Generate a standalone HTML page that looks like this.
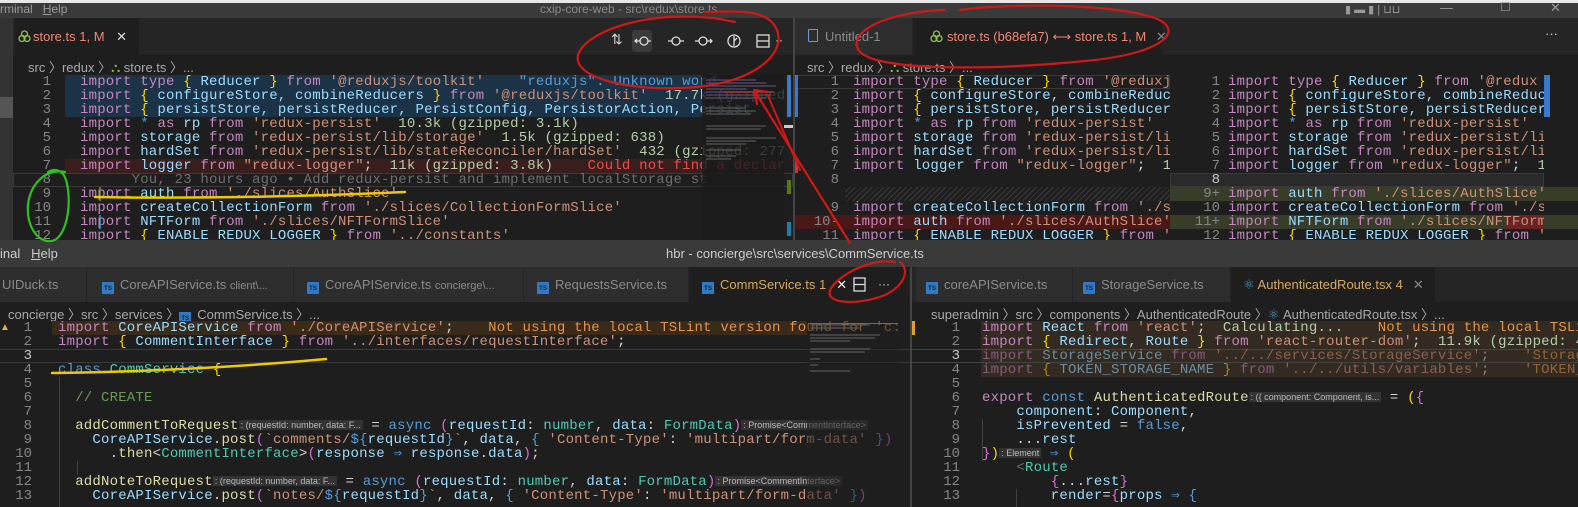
<!DOCTYPE html>
<html><head><meta charset="utf-8"><style>
*{margin:0;padding:0;box-sizing:border-box}
body{width:1578px;height:507px;background:#1e1e1e;position:relative;overflow:hidden;font-family:"Liberation Sans",sans-serif}
.a{position:absolute}
.pane{position:absolute;overflow:hidden}
.ln{position:absolute;height:14px;line-height:14px;white-space:pre;font-family:"Liberation Mono",monospace;font-size:14px;letter-spacing:0.2px;color:#9cdcfe}
.num{position:absolute;height:14px;line-height:14px;font-family:"Liberation Mono",monospace;font-size:14px;color:#858585;text-align:right;white-space:pre}
.k{color:#c586c0}.b{color:#ffd700}.s{color:#ce9178}.c{color:#6a9955}.n{color:#b5cea8}.g{color:#6e6e6e}.w{color:#d4d4d4}.e{color:#e2944a}.t{color:#4ec9b0}.bl{color:#569cd6}.y{color:#dcdcaa}.p{color:#da70d6}
.hint{font-family:"Liberation Sans",sans-serif;font-size:9px;background:#333;color:#bbb;padding:0 2px;letter-spacing:0;position:relative;top:-1px}
.tab{position:absolute;height:35px;line-height:35px;font-size:13px;color:#8b8b8b;white-space:nowrap;background:#2d2d2d;border-right:1px solid #252526}
.crumb{position:absolute;font-size:13px;color:#a9a9a9;white-space:nowrap}
.ts{display:inline-block;width:12px;height:12px;background:#3178c6;color:#1e1e1e;font-size:6px;line-height:14px;text-align:center;font-weight:bold;vertical-align:-1px;margin-right:6px}
</style></head><body>

<!-- ===== TOP HALF ===== -->
<div class="a" style="left:0;top:0;width:1578px;height:3px;background:#e8e8e8"></div>
<div class="a" style="left:0;top:3px;width:1578px;height:15px;background:#3a3a3a"></div>
<div class="a" style="left:0;top:2px;font-size:12px;color:#9a9a9a;white-space:pre">rminal   <u>H</u>elp</div>
<div class="a" style="left:540px;top:2px;font-size:12px;color:#8a8a8a">cxip-core-web - src\redux\store.ts</div>
<div class="a" style="left:1345px;top:3px;width:90px;height:12px;color:#999;font-size:11px">▮ ▬ ▮ | ⊔⊔</div>
<div class="a" style="left:1440px;top:0;font-size:13px;color:#999">—</div>
<div class="a" style="left:1500px;top:0;font-size:12px;color:#999">☐</div>
<div class="a" style="left:1550px;top:0;font-size:13px;color:#999">✕</div>

<!-- top-left pane -->
<div class="a" style="left:0;top:18px;width:13px;height:222px;background:#333"></div>
<div class="a" style="left:0;top:97px;width:13px;height:21px;background:#555"></div>
<div class="pane" style="left:13px;top:18px;width:780px;height:222px;background:#1e1e1e">
  <div class="a" style="left:0;top:0;width:780px;height:37px;background:#252526"></div>
  <div class="tab" style="left:2px;top:0;width:125px;height:37px;line-height:37px;background:#1e1e1e;color:#f48771;padding-left:18px">store.ts 1, M <span style="color:#ddd;margin-left:8px">✕</span></div>
  <svg class="a" style="left:5px;top:12px" width="13" height="13" viewBox="0 0 13 13"><g fill="none" stroke="#8dc149" stroke-width="1.3"><circle cx="6.5" cy="4" r="3"/><circle cx="4" cy="8.5" r="3"/><circle cx="9" cy="8.5" r="3"/></g></svg>
  <div class="a" style="left:619px;top:12px;width:20px;height:22px;background:#3a3a3a;border-radius:3px"></div>
  <div class="a" style="left:598px;top:13px;color:#ccc;font-size:14px">⇅</div>
  <svg class="a" style="left:620px;top:15px" width="150" height="16" viewBox="0 0 150 16"><g fill="none" stroke="#ddd" stroke-width="1.3"><circle cx="11" cy="8" r="4"/><path d="M2 8h5M15 8h3M4 6l-2 2 2 2"/><circle cx="43" cy="8" r="4"/><path d="M35 8h4M47 8h4"/><circle cx="70" cy="8" r="4"/><path d="M62 8h4M74 8h5M77 6l2 2-2 2"/><circle cx="101" cy="8" r="6"/><path d="M101 3v10M101 8l3-3"/><rect x="124" y="2" width="12" height="12"/><path d="M124 8h12"/></g><text x="142" y="11" fill="#ddd" font-size="12">···</text></svg>
  <div class="crumb" style="left:15px;top:39px">src 〉redux 〉<span style="color:#8dc149">⛬</span> store.ts 〉...</div>
</div>
<div class="pane" style="left:13px;top:75px;width:780px;height:165px">
  <div class="a" style="left:52px;top:0;width:640px;height:42px;background:#1c3347"></div>
  <div class="a" style="left:52px;top:84px;width:640px;height:14px;background:#3a1d1d"></div>
  <div class="a" style="left:0;top:98px;width:780px;height:14px;border:1px solid #3a3a3a"></div>
  <div class="a" style="left:86px;top:112px;width:2px;height:14px;background:#587c0c"></div>
  <div class="a" style="left:86px;top:140px;width:2px;height:14px;background:#1b81a8"></div>
  <div class="num" style="left:0;top:0;width:38px">1
2
3
4
5
6
7
8
9
10
11
12</div>
</div>
<div class="pane" style="left:80px;top:75px;width:705px;height:165px">
<div class="ln" style="top:0"><span class="k">import</span> <span class="k">type</span> <span class="b">{</span> Reducer <span class="b">}</span> <span class="k">from</span> <span class="s">'@reduxjs/toolkit'</span>    <span class="bl">"reduxjs": Unknown word</span></div>
<div class="ln" style="top:14px"><span class="k">import</span> <span class="b">{</span> configureStore, combineReducers <span class="b">}</span> <span class="k">from</span> <span class="s">'@reduxjs/toolkit'</span>  <span class="n">17.7k (gzipped</span></div>
<div class="ln" style="top:28px"><span class="k">import</span> <span class="b">{</span> persistStore, persistReducer, PersistConfig, PersistorAction, Persist</div>
<div class="ln" style="top:42px"><span class="k">import</span> <span class="bl">*</span> <span class="k">as</span> rp <span class="k">from</span> <span class="s">'redux-persist'</span>  <span class="n">10.3k (gzipped: 3.1k)</span></div>
<div class="ln" style="top:56px"><span class="k">import</span> storage <span class="k">from</span> <span class="s">'redux-persist/lib/storage'</span>  <span class="n">1.5k (gzipped: 638)</span></div>
<div class="ln" style="top:70px"><span class="k">import</span> hardSet <span class="k">from</span> <span class="s">'redux-persist/lib/stateReconciler/hardSet'</span>  <span class="n">432 (gzipped: 277)</span></div>
<div class="ln" style="top:84px"><span class="k">import</span> logger <span class="k">from</span> <span class="s">"redux-logger"</span><span class="w">;</span>  <span class="n">11k (gzipped: 3.8k)</span>    <span style="color:#f14c4c">Could not find a declar</span></div>
<div class="ln g" style="top:98px">      You, 23 hours ago • Add redux-persist and implement localStorage st</div>
<div class="ln" style="top:112px"><span class="k">import</span> auth <span class="k">from</span> <span class="s">'./slices/AuthSlice'</span></div>
<div class="ln" style="top:126px"><span class="k">import</span> createCollectionForm <span class="k">from</span> <span class="s">'./slices/CollectionFormSlice'</span></div>
<div class="ln" style="top:140px"><span class="k">import</span> NFTForm <span class="k">from</span> <span class="s">'./slices/NFTFormSlice'</span></div>
<div class="ln" style="top:154px"><span class="k">import</span> <span class="b">{</span> ENABLE_REDUX_LOGGER <span class="b">}</span> <span class="k">from</span> <span class="s">'../constants'</span></div>
</div>
<!-- minimap -->
<div class="a" style="left:702px;top:75px;width:82px;height:165px;background:rgba(26,26,26,0.8)"></div>
<svg class="a" style="left:704px;top:78px" width="78" height="150"><g stroke-width="1.2">
<path d="M2 2h50M2 5h60M2 8h70M2 11h40M2 14h45M2 17h65M2 20h60" stroke="#5a4a70"/><path d="M20 14h50" stroke="#b04040"/>
<path d="M2 30h40M2 33h50M2 36h45M2 48h60M2 51h55M2 60h70M2 63h50M2 66h40M2 72h35M2 78h30M2 81h25" stroke="#555"/>
</g></svg>
<div class="a" style="left:787px;top:75px;width:4px;height:42px;background:#3a78c8"></div>
<div class="a" style="left:787px;top:180px;width:4px;height:14px;background:#587c0c"></div>
<div class="a" style="left:787px;top:222px;width:4px;height:14px;background:#1b81a8"></div>
<div class="a" style="left:784px;top:125px;width:10px;height:3px;background:#ccc"></div>

<!-- top-right pane -->
<div class="a" style="left:793px;top:18px;width:2px;height:222px;background:#444"></div>
<div class="pane" style="left:795px;top:18px;width:783px;height:222px;background:#1e1e1e">
  <div class="a" style="left:0;top:0;width:783px;height:37px;background:#252526"></div>
  <div class="tab" style="left:0;top:0;width:118px;height:37px;line-height:37px;padding-left:30px">Untitled-1</div>
  <div class="a" style="left:13px;top:11px;width:10px;height:13px;border:1.5px solid #6b9bd1;border-radius:1px"></div>
  <div class="tab" style="left:118px;top:0;width:250px;height:37px;line-height:37px;background:#1e1e1e;color:#f48771;padding-left:34px">store.ts (b68efa7) ⟷ store.ts 1, M <span style="color:#888;margin-left:6px">✕</span></div>
  <svg class="a" style="left:135px;top:12px" width="13" height="13" viewBox="0 0 13 13"><g fill="none" stroke="#8dc149" stroke-width="1.3"><circle cx="6.5" cy="4" r="3"/><circle cx="4" cy="8.5" r="3"/><circle cx="9" cy="8.5" r="3"/></g></svg>
  <div class="a" style="left:750px;top:8px;color:#ccc;font-size:13px">···</div>
  <div class="crumb" style="left:12px;top:39px">src 〉redux 〉<span style="color:#8dc149">⛬</span> store.ts 〉...</div>
</div>
<div class="pane" style="left:795px;top:75px;width:375px;height:165px">
  <div class="a" style="left:0;top:0;width:375px;height:14px;border:1px solid #3a3a3a"></div>
  <div class="a" style="left:0;top:140px;width:375px;height:14px;background:#4b1818"></div>
  <div class="a" style="left:50px;top:112px;width:325px;height:14px;background:repeating-linear-gradient(135deg,#1e1e1e 0 3px,#3a3a3a 3px 4px)"></div>
  <div class="a" style="left:0;top:0;width:3px;height:42px;background:#3a78c8"></div>
  <div class="a" style="left:0;top:84px;width:3px;height:14px;background:#c33"></div>
  <div class="num" style="left:0;top:0;width:44px">1
2
3
4
5
6
7
8

9
10-
11</div>
<div style="position:absolute;left:58px;top:0">
<div class="ln" style="top:0"><span class="k">import</span> <span class="k">type</span> <span class="b">{</span> Reducer <span class="b">}</span> <span class="k">from</span> <span class="s">'@reduxjs</span></div>
<div class="ln" style="top:14px"><span class="k">import</span> <span class="b">{</span> configureStore, combineReduc</div>
<div class="ln" style="top:28px"><span class="k">import</span> <span class="b">{</span> persistStore, persistReducer</div>
<div class="ln" style="top:42px"><span class="k">import</span> <span class="bl">*</span> <span class="k">as</span> rp <span class="k">from</span> <span class="s">'redux-persist'</span></div>
<div class="ln" style="top:56px"><span class="k">import</span> storage <span class="k">from</span> <span class="s">'redux-persist/li</span></div>
<div class="ln" style="top:70px"><span class="k">import</span> hardSet <span class="k">from</span> <span class="s">'redux-persist/li</span></div>
<div class="ln" style="top:84px"><span class="k">import</span> logger <span class="k">from</span> <span class="s">"redux-logger"</span><span class="w">;</span>  <span class="n">1</span></div>
<div class="ln" style="top:126px"><span class="k">import</span> createCollectionForm <span class="k">from</span> <span class="s">'./s</span></div>
<div class="ln" style="top:140px"><span class="k">import</span> auth <span class="k">from</span> <span class="s">'./slices/AuthSlice'</span></div>
<div class="ln" style="top:154px"><span class="k">import</span> <span class="b">{</span> ENABLE_REDUX_LOGGER <span class="b">}</span> <span class="k">from</span> <span class="s">'</span></div>
</div>
</div>
<div class="pane" style="left:1170px;top:75px;width:374px;height:165px">
  <div class="a" style="left:0;top:98px;width:374px;height:14px;background:#2a2a2a;border:1px solid #3a3a3a"></div>
  <div class="a" style="left:0;top:112px;width:374px;height:14px;background:#373d29"></div>
  <div class="a" style="left:0;top:140px;width:374px;height:14px;background:#373d29"></div>
  <div class="a" style="left:335px;top:140px;width:39px;height:14px;background:#6b2222"></div>
  <div class="num" style="left:0;top:0;width:50px">1
2
3
4
5
6
7
<span style="color:#c6c6c6">8</span>
9+
10
11+
12</div>
<div style="position:absolute;left:58px;top:0">
<div class="ln" style="top:0"><span class="k">import</span> <span class="k">type</span> <span class="b">{</span> Reducer <span class="b">}</span> <span class="k">from</span> <span class="s">'@redux</span></div>
<div class="ln" style="top:14px"><span class="k">import</span> <span class="b">{</span> configureStore, combineReduc</div>
<div class="ln" style="top:28px"><span class="k">import</span> <span class="b">{</span> persistStore, persistReducer</div>
<div class="ln" style="top:42px"><span class="k">import</span> <span class="bl">*</span> <span class="k">as</span> rp <span class="k">from</span> <span class="s">'redux-persist'</span></div>
<div class="ln" style="top:56px"><span class="k">import</span> storage <span class="k">from</span> <span class="s">'redux-persist/li</span></div>
<div class="ln" style="top:70px"><span class="k">import</span> hardSet <span class="k">from</span> <span class="s">'redux-persist/li</span></div>
<div class="ln" style="top:84px"><span class="k">import</span> logger <span class="k">from</span> <span class="s">"redux-logger"</span><span class="w">;</span>  <span class="n">1</span></div>
<div class="ln" style="top:112px"><span class="k">import</span> auth <span class="k">from</span> <span class="s">'./slices/AuthSlice'</span></div>
<div class="ln" style="top:126px"><span class="k">import</span> createCollectionForm <span class="k">from</span> <span class="s">'./s</span></div>
<div class="ln" style="top:140px"><span class="k">import</span> NFTForm <span class="k">from</span> <span class="s">'./slices/NFTForm</span></div>
<div class="ln" style="top:154px"><span class="k">import</span> <span class="b">{</span> ENABLE_REDUX_LOGGER <span class="b">}</span> <span class="k">from</span> <span class="s">'</span></div>
</div>
</div>
<div class="a" style="left:1544px;top:75px;width:34px;height:165px;background:#1e1e1e"></div>
<div class="a" style="left:1544px;top:75px;width:6px;height:42px;background:#3a78c8"></div>
<div class="a" style="left:1544px;top:187px;width:34px;height:14px;background:#373d29"></div>
<div class="a" style="left:1544px;top:215px;width:34px;height:14px;background:#373d29"></div>

<!-- ===== BOTTOM HALF ===== -->
<div class="a" style="left:0;top:240px;width:1578px;height:27px;background:#3a3a3a"></div>
<div class="a" style="left:0;top:246px;font-size:13px;color:#ccc;white-space:pre">inal   <u>H</u>elp</div>
<div class="a" style="left:666px;top:246px;font-size:13px;color:#ccc">hbr - concierge\src\services\CommService.ts</div>

<div class="a" style="left:0;top:267px;width:1578px;height:35px;background:#252526"></div>
<div class="tab" style="left:0;top:267px;width:87px;padding-left:2px">UIDuck.ts</div>
<div class="tab" style="left:87px;top:267px;width:207px;padding-left:15px"><span class="ts">TS</span>CoreAPIService.ts <span style="font-size:11px">client\...</span></div>
<div class="tab" style="left:294px;top:267px;width:230px;padding-left:13px"><span class="ts">TS</span>CoreAPIService.ts <span style="font-size:11px">concierge\...</span></div>
<div class="tab" style="left:524px;top:267px;width:165px;padding-left:13px"><span class="ts">TS</span>RequestsService.ts</div>
<div class="tab" style="left:689px;top:267px;width:221px;padding-left:13px;background:#1e1e1e;color:#d7a85d"><span class="ts">TS</span>CommService.ts <span style="color:#d7a85d">1</span><span style="color:#eee;margin-left:10px">✕</span></div>
<svg class="a" style="left:852px;top:277px" width="50" height="16"><g fill="none" stroke="#ddd" stroke-width="1.3"><rect x="2" y="1" width="11" height="13"/><path d="M2 7.5h11"/></g><text x="26" y="11" fill="#ddd" font-size="12">···</text></svg>
<div class="crumb" style="left:8px;top:304px">concierge 〉src 〉services 〉<span class="ts">TS</span>CommService.ts 〉...</div>

<div class="pane" style="left:0;top:321px;width:910px;height:186px">
  <div class="a" style="left:52px;top:0;width:755px;height:14px;background:#3a2a1a"></div>
  <div class="a" style="left:0;top:28px;width:910px;height:14px;border-top:1px solid #3a3a3a;border-bottom:1px solid #3a3a3a"></div>
  <div class="a" style="left:0;top:1px;color:#e0b040;font-size:10px">▲</div>
  <div class="num" style="left:0;top:0;width:32px">1
2
<span style="color:#c6c6c6">3</span>
4
5
6
7
8
9
10
11
12
13</div>
  <div class="a" style="left:59px;top:56px;width:1px;height:130px;background:#404040"></div>
  <div class="a" style="left:77px;top:140px;width:1px;height:14px;background:#404040"></div>
<div style="position:absolute;left:58px;top:0">
<div class="ln" style="top:0"><span class="k">import</span> CoreAPIService <span class="k">from</span> <span class="s">'./CoreAPIService'</span><span class="w">;</span>    <span class="e">Not using the local TSLint version found for 'c:</span></div>
<div class="ln" style="top:14px"><span class="k">import</span> <span class="b">{</span> CommentInterface <span class="b">}</span> <span class="k">from</span> <span class="s">'../interfaces/requestInterface'</span><span class="w">;</span></div>
<div class="ln" style="top:42px"><span class="bl">class</span> <span class="t">CommService</span> <span class="b">{</span></div>
<div class="ln c" style="top:70px">  // CREATE</div>
<div class="ln" style="top:98px">  <span class="y">addCommentToRequest</span><span class="hint">: (requestId: number, data: F...</span> <span class="w">=</span> <span class="bl">async</span> <span class="p">(</span>requestId<span class="w">:</span> <span class="t">number</span><span class="w">,</span> data<span class="w">:</span> <span class="t">FormData</span><span class="p">)</span><span class="hint">: Promise&lt;CommentInterface&gt;</span></div>
<div class="ln" style="top:112px">    CoreAPIService<span class="w">.</span><span class="y">post</span><span class="p">(</span><span class="s">`comments/</span><span class="bl">${</span>requestId<span class="bl">}</span><span class="s">`</span><span class="w">,</span> data<span class="w">,</span> <span class="bl">{</span> <span class="s">'Content-Type'</span><span class="w">:</span> <span class="s">'multipart/form-data'</span> <span class="bl">}</span><span class="p">)</span></div>
<div class="ln" style="top:126px">      <span class="w">.</span><span class="y">then</span><span class="w">&lt;</span><span class="t">CommentInterface</span><span class="w">&gt;</span><span class="p">(</span>response <span class="bl">⇒</span> response<span class="w">.</span>data<span class="p">)</span><span class="w">;</span></div>
<div class="ln" style="top:154px">  <span class="y">addNoteToRequest</span><span class="hint">: (requestId: number, data: F...</span> <span class="w">=</span> <span class="bl">async</span> <span class="p">(</span>requestId<span class="w">:</span> <span class="t">number</span><span class="w">,</span> data<span class="w">:</span> <span class="t">FormData</span><span class="p">)</span><span class="hint">: Promise&lt;CommentInterface&gt;</span></div>
<div class="ln" style="top:168px">    CoreAPIService<span class="w">.</span><span class="y">post</span><span class="p">(</span><span class="s">`notes/</span><span class="bl">${</span>requestId<span class="bl">}</span><span class="s">`</span><span class="w">,</span> data<span class="w">,</span> <span class="bl">{</span> <span class="s">'Content-Type'</span><span class="w">:</span> <span class="s">'multipart/form-data'</span> <span class="bl">}</span><span class="p">)</span></div>
</div>
  <div class="a" style="left:807px;top:0;width:93px;height:186px;background:rgba(31,31,31,0.55)"></div>
  <svg class="a" style="left:808px;top:2px" width="90" height="90"><g stroke="#666" stroke-width="1"><path d="M2 2h60M2 5h50M2 12h70M2 15h65M2 18h40M2 26h60M2 29h55M2 36h10M2 42h8M2 48h40"/></g><path d="M0 0h90" stroke="#a06020" stroke-width="2"/></svg>
</div>
<div class="a" style="left:910px;top:267px;width:2px;height:240px;background:#444"></div>

<!-- bottom-right -->
<div class="tab" style="left:916px;top:267px;width:157px;padding-left:10px"><span class="ts">TS</span>coreAPIService.ts</div>
<div class="tab" style="left:1073px;top:267px;width:158px;padding-left:10px"><span class="ts">TS</span>StorageService.ts</div>
<div class="tab" style="left:1231px;top:267px;width:205px;padding-left:12px;background:#1e1e1e;color:#d7a85d"><span style="color:#519aba">⚛</span> AuthenticatedRoute.tsx 4<span style="color:#888;margin-left:10px">✕</span></div>
<div class="crumb" style="left:931px;top:304px">superadmin 〉src 〉components 〉AuthenticatedRoute 〉<span style="color:#519aba">⚛</span> AuthenticatedRoute.tsx 〉...</div>
<div class="pane" style="left:912px;top:321px;width:666px;height:186px">
  <div class="a" style="left:69px;top:0;width:600px;height:56px;background:#332a22"></div>
  <div class="a" style="left:0;top:28px;width:666px;height:14px;border-top:1px solid #444;border-bottom:1px solid #444"></div>
  <div class="a" style="left:0;top:0;width:3px;height:14px;background:#e0a030"></div>
  <div class="num" style="left:0;top:0;width:48px">1
2
<span style="color:#c6c6c6">3</span>
4
5
6
7
8
9
10
11
12
13</div>
  <div class="a" style="left:70px;top:98px;width:1px;height:42px;background:#404040"></div>
  <div class="a" style="left:104px;top:168px;width:1px;height:18px;background:#404040"></div>
<div style="position:absolute;left:70px;top:0">
<div class="ln" style="top:0"><span class="k">import</span> React <span class="k">from</span> <span class="s">'react'</span><span class="w">;</span>  <span class="n">Calculating...</span>    <span class="e">Not using the local TSLint</span></div>
<div class="ln" style="top:14px"><span class="k">import</span> <span class="b">{</span> Redirect<span class="w">,</span> Route <span class="b">}</span> <span class="k">from</span> <span class="s">'react-router-dom'</span><span class="w">;</span>  <span class="n">11.9k (gzipped: 4</span></div>
<div class="ln" style="top:28px;opacity:.55"><span class="k">import</span> StorageService <span class="k">from</span> <span class="s">'../../services/StorageService'</span><span class="w">;</span>    <span class="e">'StorageS</span></div>
<div class="ln" style="top:42px;opacity:.55"><span class="k">import</span> <span class="b">{</span> TOKEN_STORAGE_NAME <span class="b">}</span> <span class="k">from</span> <span class="s">'../../utils/variables'</span><span class="w">;</span>    <span class="e">'TOKEN_</span></div>
<div class="ln" style="top:70px"><span class="k">export</span> <span class="bl">const</span> <span class="y">AuthenticatedRoute</span><span class="hint">: ({ component: Component, is...</span> <span class="w">=</span> <span class="b">(</span><span class="p">{</span></div>
<div class="ln" style="top:84px">    component<span class="w">:</span> Component<span class="w">,</span></div>
<div class="ln" style="top:98px">    isPrevented <span class="w">=</span> <span class="bl">false</span><span class="w">,</span></div>
<div class="ln" style="top:112px">    <span class="w">...</span>rest</div>
<div class="ln" style="top:126px"><span class="p">}</span><span class="b">)</span><span class="hint">: Element</span> <span class="bl">⇒</span> <span class="b">(</span></div>
<div class="ln" style="top:140px">    <span class="g">&lt;</span><span class="t">Route</span></div>
<div class="ln" style="top:154px">        <span class="p">{</span><span class="w">...</span>rest<span class="p">}</span></div>
<div class="ln" style="top:168px">        render<span class="w">=</span><span class="p">{</span>props <span class="bl">⇒</span> <span class="bl">{</span></div>
</div>
</div>

<!-- ===== ANNOTATIONS ===== -->
<svg class="a" style="left:0;top:0" width="1578" height="507">
<g fill="none" stroke-linecap="round">
<path d="M735 22 C660 5 585 30 578 55 C572 80 640 94 705 86 C765 78 792 45 772 22 C757 8 730 12 705 12" stroke="#d01818" stroke-width="2.2"/>
<path d="M945 10 C880 12 845 35 860 52 C880 72 1000 70 1095 60 C1165 52 1185 30 1155 18 C1105 2 1000 4 960 10" stroke="#d01818" stroke-width="2.2"/>
<path d="M895 262 C870 258 838 275 830 290 C825 305 860 305 885 295 C905 285 910 270 900 262" stroke="#d01818" stroke-width="2.2"/>
<path d="M850 243 L754 90 M754 90 L768 92 M754 90 L757 104" stroke="#d01818" stroke-width="2.2"/>
<path d="M768 96 L800 170" stroke="#d01818" stroke-width="2"/>
<path d="M95 197 C200 199 320 196 405 192" stroke="#f0c800" stroke-width="2.5"/>
<path d="M52 373 C150 372 250 366 326 359" stroke="#f0c800" stroke-width="2.5"/>
<path d="M65 172 C45 168 30 185 28 205 C26 228 40 246 55 240 C68 232 72 200 66 180 C63 170 55 168 48 172" stroke="#30c020" stroke-width="2.2"/>
</g></svg>
</body></html>
